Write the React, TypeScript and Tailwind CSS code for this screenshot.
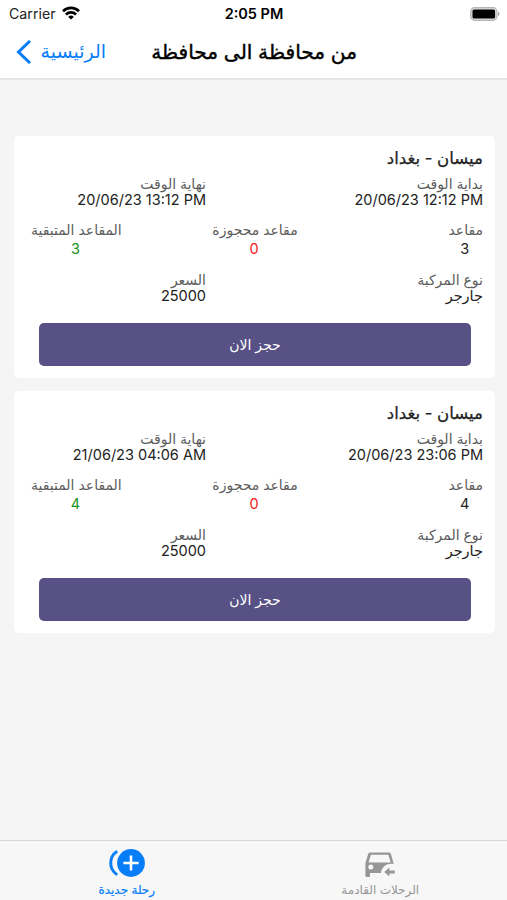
import React from 'react';

type Trip = { start: string; end: string; seats: number; booked: number; left: number };

const trips: Trip[] = [
  { start: '20/06/23 12:12 PM', end: '20/06/23 13:12 PM', seats: 3, booked: 0, left: 3 },
  { start: '20/06/23 23:06 PM', end: '21/06/23 04:06 AM', seats: 4, booked: 0, left: 4 },
];

function Label({ children }: { children: React.ReactNode }) {
  return <div className="h-4 text-[14px] leading-4 whitespace-nowrap text-[#5c5c5c]">{children}</div>;
}

function Value({ children }: { children: React.ReactNode }) {
  return (
    <div className="h-4 text-[14.5px] leading-4 whitespace-nowrap text-[#222]">
      <bdi dir="auto">{children}</bdi>
    </div>
  );
}

function Seats({ label, value, color }: { label: string; value: number; color: string }) {
  return (
    <div className="flex flex-col items-center gap-[3px]">
      <Label>{label}</Label>
      <div className={'h-4 pr-[2px] text-[14.5px] leading-4 ' + color}>{value}</div>
    </div>
  );
}

function TripCard({ trip }: { trip: Trip }) {
  return (
    <section className="h-[242px] rounded-[5px] bg-white pt-[11px] pr-3 pl-[17px]">
      <h2 className="h-[22px] text-[16.6px] leading-[22px] text-[#222] [-webkit-text-stroke:0.25px_#222]">
        ميسان - بغداد
      </h2>
      <div className="mt-[7px] flex">
        <div className="w-[277px]">
          <Label>بداية الوقت</Label>
          <Value>{trip.start}</Value>
        </div>
        <div>
          <Label>نهاية الوقت</Label>
          <Value>{trip.end}</Value>
        </div>
      </div>
      <div className="mt-[14px] grid grid-cols-[185px_86px_181px]">
        <div className="flex justify-start">
          <Seats label="مقاعد" value={trip.seats} color="text-[#222]" />
        </div>
        <Seats label="مقاعد محجوزة" value={trip.booked} color="text-[#f5221b]" />
        <div className="flex justify-end">
          <Seats label="المقاعد المتبقية" value={trip.left} color="text-[#179117]" />
        </div>
      </div>
      <div className="mt-[15px] flex">
        <div className="w-[277px]">
          <Label>نوع المركبة</Label>
          <Value>جارجر</Value>
        </div>
        <div>
          <Label>السعر</Label>
          <Value>25000</Value>
        </div>
      </div>
      <button className="mt-[19px] mr-3 ml-2 block h-[43px] w-[432px] rounded-[5px] bg-[#575186] text-[14px] text-white">
        حجز الان
      </button>
    </section>
  );
}

function WifiIcon() {
  return (
    <svg width="18" height="14" viewBox="0 0 18 14" fill="none" stroke="#000" strokeWidth="2.6">
      <path d="M1 5.2a11.4 11.4 0 0 1 16 0" />
      <path d="M3.900 8.500a7.300 7.300 0 0 1 10.200 0" />
      <path d="M9 13.500 6.200 10.900a4 4 0 0 1 5.600 0Z" fill="#000" stroke="none" />
    </svg>
  );
}

function BatteryIcon() {
  return (
    <svg width="31" height="14" viewBox="0 0 31 14">
      <rect x=".7" y=".7" width="26.2" height="12.6" rx="3.8" fill="#ddd" stroke="#b5b5b5" strokeWidth="1.2" />
      <rect x="2.5" y="2.5" width="22.6" height="9" rx="1.6" />
      <path d="M28 4.8c2 .6 2 3.800 0 4.400Z" fill="#aaa" />
    </svg>
  );
}

function AddTripIcon() {
  return (
    <svg width="37" height="28" viewBox="0 0 37 28" fill="none">
      <circle cx="23" cy="14" r="13.900" fill="#087df8" />
      <path d="M23 6.400v15.200M15.400 14h15.200" stroke="#fff" strokeWidth="2.600" />
      <path d="M9.200 2.200a14 14 0 0 0 0 23.600" stroke="#087df8" strokeWidth="2.900" />
    </svg>
  );
}

function CarIcon() {
  return (
    <svg width="31" height="26" viewBox="0 0 31 26" fill="#969696">
      <path
        fillRule="evenodd"
        d="M5.300.5h18.500c1.200 0 1.800.6 2.200 1.700l2.600 9.300v.6c-5.500-1.200-12 2-12.600 8.900H5v2.500c0 1-.7 1.600-1.600 1.600H2c-1 0-1.600-.6-1.600-1.600V11.100L3.100 2.200C3.500 1.100 4.100.5 5.300.5Zm.7 2.200L3.500 10.500h22.200l-2.400-7.800Zm-.2 9.700a2.500 2.500 0 1 0 0 5 2.500 2.500 0 0 0 0-5Z"
      />
      <path d="m19.300 20 5.100-4.600v3.100h5.400v3h-5.400v3.100Z" />
    </svg>
  );
}

export default function App() {
  return (
    <main
      dir="rtl"
      className="flex h-[900px] w-[507px] flex-col overflow-hidden bg-[#f5f5f5] font-['Inter','DejaVu_Sans',sans-serif]"
    >
      <header className="h-20 shrink-0 border-b-2 border-[#e5e5e5] bg-white">
        <div dir="ltr" className="grid h-[27px] grid-cols-3 items-center pr-[6px] pl-[9px] text-[14.2px] text-[#222]">
          <div className="flex items-center gap-[6px]">
            Carrier <WifiIcon />
          </div>
          <div className="pr-[2px] text-center text-[14.5px] font-semibold text-black">2:05 PM</div>
          <div className="flex justify-end">
            <BatteryIcon />
          </div>
        </div>
        <div dir="ltr" className="flex h-[50px] items-center pl-4">
          <svg width="16" height="24" viewBox="0 0 16 24" fill="none" stroke="#087df8" strokeWidth="3">
            <path d="M14 1 2.500 12 14 23" />
          </svg>
          <span dir="rtl" className="ml-[9px] w-[65px] text-[19px] whitespace-nowrap text-[#087df8]">الرئيسية</span>
          <h1
            dir="rtl"
            className="ml-[45px] w-[206px] text-[20.2px] whitespace-nowrap text-black [-webkit-text-stroke:0.4px_#000]"
          >
            من محافظة الى محافظة
          </h1>
        </div>
      </header>
      <div className="flex grow flex-col gap-[13px] pt-14 pr-3 pl-[14px]">
        {trips.map((trip) => (
          <TripCard key={trip.start} trip={trip} />
        ))}
      </div>
      <nav className="flex h-[60px] shrink-0 border-t border-[#d6d6d6] bg-[#f7f7f7] text-[12px]">
        <div className="flex w-1/2 flex-col items-center pt-[11px] text-[#969696]">
          <CarIcon />
          <span className="mt-1 leading-4">الرحلات القادمة</span>
        </div>
        <div className="flex w-1/2 flex-col items-center pt-2 text-[#087df8]">
          <AddTripIcon />
          <span className="mt-[5px] leading-4 [-webkit-text-stroke:0.2px_#087df8]">رحلة جديدة</span>
        </div>
      </nav>
    </main>
  );
}
